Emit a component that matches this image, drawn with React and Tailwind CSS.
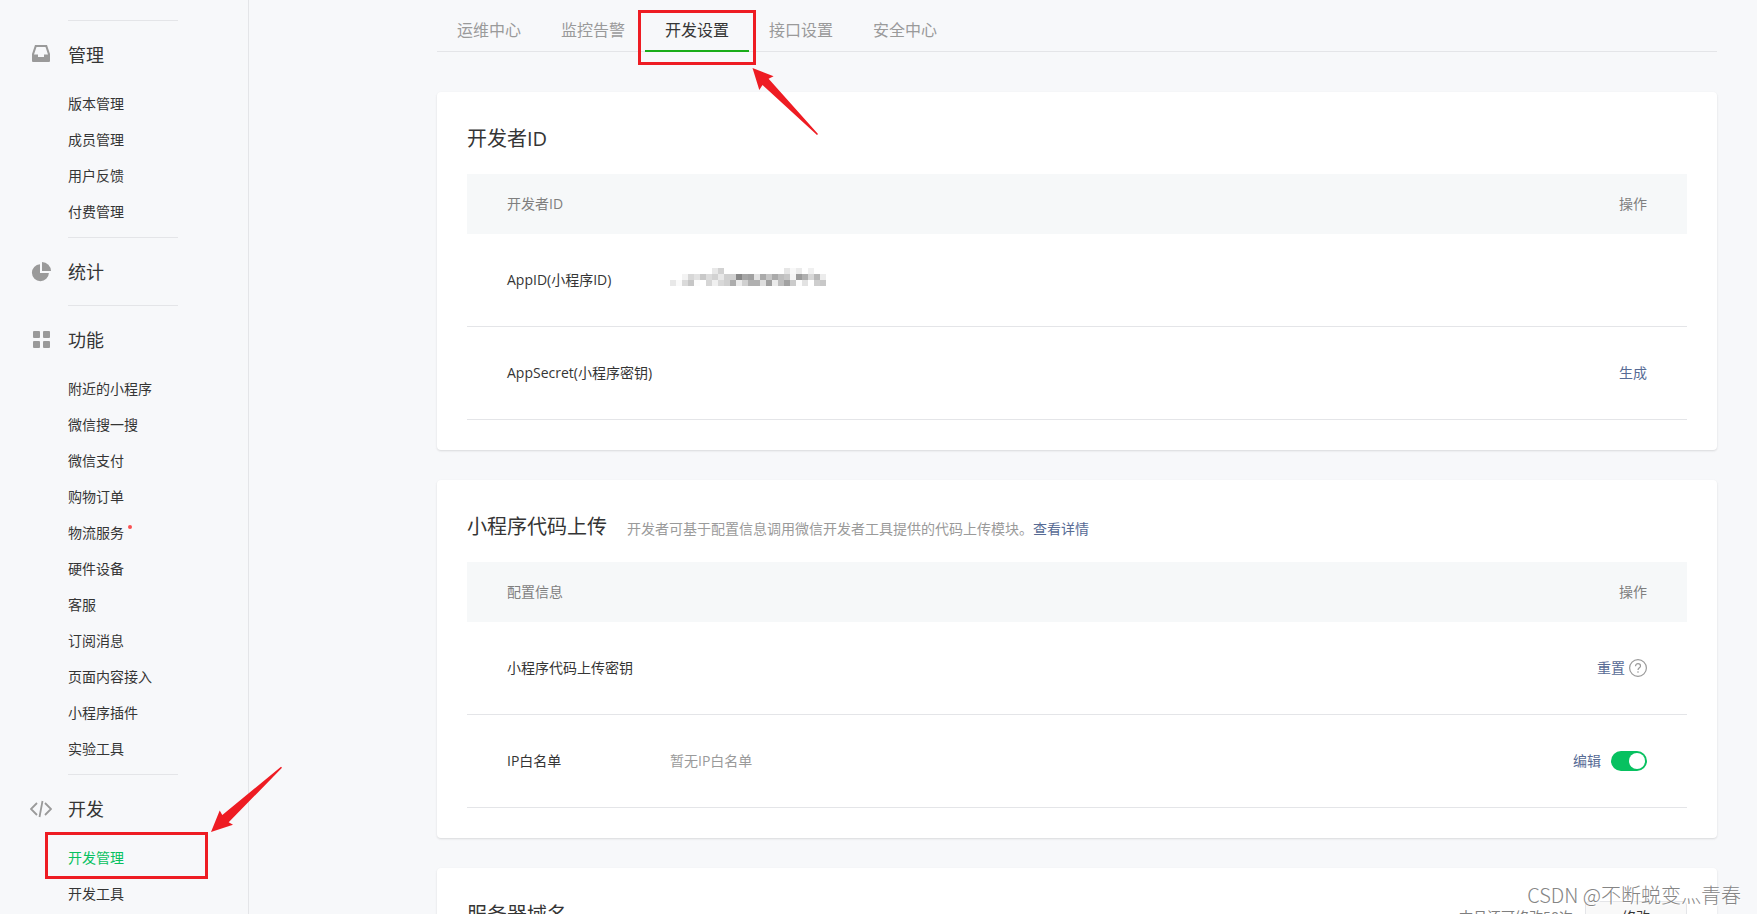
const MENU = [
  {
    title: '管理',
    icon: 'inbox',
    items: [{ name: '版本管理' }, { name: '成员管理' }, { name: '用户反馈' }, { name: '付费管理' }],
  },
  { title: '统计', icon: 'pie', items: [] },
  {
    title: '功能',
    icon: 'grid',
    items: [
      { name: '附近的小程序' },
      { name: '微信搜一搜' },
      { name: '微信支付' },
      { name: '购物订单' },
      { name: '物流服务', dot: true },
      { name: '硬件设备' },
      { name: '客服' },
      { name: '订阅消息' },
      { name: '页面内容接入' },
      { name: '小程序插件' },
      { name: '实验工具' },
    ],
  },
  {
    title: '开发',
    icon: 'code',
    items: [{ name: '开发管理', active: true }, { name: '开发工具' }],
  },
];

const TABS = ['运维中心', '监控告警', '开发设置', '接口设置', '安全中心'];

// grey level of each 6px block, null = empty
const MOSAIC = [
  [null, null, null, null, null, null, null, 232, 210, null, null, null, null, null, null, null, null, null, null, 230, 248, 235, null, 240, null, null],
  [null, null, 243, 215, 226, 200, 220, 210, 232, 208, 208, 135, 166, 160, 226, 170, 198, 170, 190, 198, 245, 155, 175, 215, 184, 236],
  [232, 250, 218, 198, 252, null, 214, 240, 216, 208, 172, 235, 208, 176, 176, 222, 160, 235, 190, 162, 203, 252, 226, null, 206, 200],
];

function MenuIcon({ type }) {
  if (type === 'inbox') {
    return (
      <svg width="22" height="22" viewBox="0 0 22 22" fill="#9a9a9a" fillRule="evenodd">
        <path d="M5 1h12l3 9v7a1 1 0 0 1-1 1H3a1 1 0 0 1-1-1v-7zM6.500 3 4 10.500h4V13h6v-2.500h4L15.500 3z" />
      </svg>
    );
  }
  if (type === 'pie') {
    return (
      <svg width="22" height="22" viewBox="0 0 22 22" fill="#9a9a9a">
        <path d="M10 3.200V12h8.900A8.500 8.500 0 1 1 10 3.200z" />
        <path d="M12 1a9 9 0 0 1 9 9h-9z" />
      </svg>
    );
  }
  if (type === 'grid') {
    return (
      <svg width="22" height="22" viewBox="0 0 22 22" fill="#9a9a9a">
        <rect x="3" y="2" width="7" height="7" rx="1" />
        <rect x="13" y="2" width="7" height="7" rx="1" />
        <rect x="3" y="12" width="7" height="7" rx="1" />
        <rect x="13" y="12" width="7" height="7" rx="1" />
      </svg>
    );
  }
  return (
    <svg width="22" height="22" viewBox="0 0 22 22" fill="none" stroke="#9a9a9a" strokeWidth="1.800">
      <path d="M7 5 1 11l6 6M15 5l6 6-6 6M12.500 3l-3 16" />
    </svg>
  );
}

function Sidebar() {
  return (
    <nav className="w-[249px] shrink-0 border-r border-[#e4e5e8] pt-5">
      {MENU.map(group => (
        <div key={group.title} className={group.items.length ? 'pb-[7px]' : 'pb-0.5'}>
          <div className="ml-[68px] w-[110px] border-t border-[#e4e5e8]" />
          <h3 className="flex items-center pt-[19px] pb-4 pl-[30px] text-lg leading-[30px] text-[#353535]">
            <span className="mr-4">
              <MenuIcon type={group.icon} />
            </span>
            {group.title}
          </h3>
          <ul>
            {group.items.map(item => (
              <li key={item.name} className="relative pl-[68px] text-sm leading-9">
                <a href="#" className={item.active ? 'text-[#07c160]' : 'text-[#353535]'}>
                  {item.name}
                </a>
                {item.dot && <i className="absolute top-2.5 left-32 size-1 rounded-full bg-[#fa5151]" />}
                {item.active && (
                  <>
                    <span className="absolute -top-2 left-[45px] h-[47px] w-[163px] border-3 border-[#ee1c23]" />
                    <svg className="absolute -top-[74px] left-[210px]" width="74" height="68" viewBox="0 0 74 68" fill="#ee1c23">
                      <path d="M1 66 9.700 44.500 12.300 49 71 .700l1 1L18.700 56.300 23 58.700z" />
                    </svg>
                  </>
                )}
              </li>
            ))}
          </ul>
        </div>
      ))}
    </nav>
  );
}

function Tabs() {
  return (
    <div className="flex h-[52px] border-b border-[#e4e5e8]">
      {TABS.map(tab => {
        const active = tab === '开发设置';
        return (
          <div key={tab} className="relative">
            <button
              className={
                active
                  ? 'h-[52px] border-b-2 border-[#1aad19] px-5 pt-2.5 text-base leading-[38px] text-[#353535]'
                  : 'h-[52px] px-5 pt-2.5 pb-0.5 text-base leading-[38px] text-[#9a9a9a]'
              }
            >
              {tab}
            </button>
            {active && (
              <>
                <span className="absolute top-2.5 -left-[7px] h-[55px] w-[118px] border-3 border-[#ee1c23]" />
                <svg className="absolute top-[67px] left-[107px]" width="68" height="70" viewBox="0 0 68 70" fill="#ee1c23">
                  <path d="M.500 1 21.600 9.300l-5 2.400L66 67l-1 1L10.500 18l-3.200 5z" />
                </svg>
              </>
            )}
          </div>
        );
      })}
    </div>
  );
}

function Card({ title, desc, extra, children }) {
  return (
    <section className="rounded-sm bg-white px-[30px] pt-[31px] pb-[30px] shadow-[0_1px_2px_rgba(150,150,150,0.3)]">
      <div className="mb-[19px] flex items-baseline leading-8">
        <h2 className="mr-5 text-xl leading-8 text-[#353535]">{title}</h2>
        {desc}
        {extra}
      </div>
      {children}
    </section>
  );
}

function ConfigTable({ head, rows }) {
  return (
    <table className="w-full table-fixed border-separate border-spacing-0 text-left text-sm text-[#353535]">
      <thead>
        <tr className="h-[60px] bg-[#f6f8f9] text-[#7f7f7f]">
          <th className="w-[203px] pl-10 font-normal">{head}</th>
          <th />
          <th className="w-[200px] pr-10 text-right font-normal">操作</th>
        </tr>
      </thead>
      <tbody>
        {rows.map(row => (
          <tr key={row.label} className="h-[93px]">
            <td className="border-b border-[#e4e5e8] pl-10 whitespace-nowrap">{row.label}</td>
            <td className="border-b border-[#e4e5e8] text-[#9a9a9a]">{row.value}</td>
            <td className="border-b border-[#e4e5e8] pr-10">
              <div className="flex items-center justify-end">{row.action}</div>
            </td>
          </tr>
        ))}
      </tbody>
    </table>
  );
}

function HiddenId() {
  return (
    <svg className="mb-1.5" width="156" height="18" viewBox="0 0 156 18" shapeRendering="crispEdges" aria-label="AppID">
      {MOSAIC.map((line, y) =>
        line.map((g, x) => g && <rect key={`${x}-${y}`} x={x * 6} y={y * 6} width="6" height="6" fill={`rgb(${g},${g},${g})`} />)
      )}
    </svg>
  );
}

function HelpIcon() {
  return (
    <svg className="ml-1" width="18" height="18" viewBox="0 0 18 18" fill="none" stroke="#9a9a9a" strokeWidth="1.200">
      <circle cx="9" cy="9" r="8.400" />
      <path d="M6.500 7.200C6.500 5.600 7.500 4.700 9 4.700s2.500.900 2.500 2.200C11.500 8.700 9 8.800 9 11" />
      <path d="M9 12.300v1.400" />
    </svg>
  );
}

function Link({ children }) {
  return (
    <a href="#" className="text-sm text-[#576b95]">
      {children}
    </a>
  );
}

export default function App() {
  return (
    <div className="relative flex h-screen overflow-hidden bg-[#f7f8fa] font-['Open_Sans','Noto_Sans_CJK_SC',sans-serif]">
      <Sidebar />
      <main className="ml-[188px] mr-10 min-w-0 flex-1">
        <Tabs />
        <div className="mt-10 flex flex-col gap-[30px]">
          <Card title="开发者ID">
            <ConfigTable
              head="开发者ID"
              rows={[
                { label: 'AppID(小程序ID)', value: <HiddenId /> },
                { label: 'AppSecret(小程序密钥)', action: <Link>生成</Link> },
              ]}
            />
          </Card>

          <Card
            title="小程序代码上传"
            desc={
              <p className="text-sm text-[#9a9a9a]">
                开发者可基于配置信息调用微信开发者工具提供的代码上传模块。<Link>查看详情</Link>
              </p>
            }
          >
            <ConfigTable
              head="配置信息"
              rows={[
                { label: '小程序代码上传密钥', action: <><Link>重置</Link><HelpIcon /></> },
                {
                  label: 'IP白名单',
                  value: '暂无IP白名单',
                  action: (
                    <>
                      <Link>编辑</Link>
                      <label className="ml-2.5 flex h-5 w-9 items-center justify-end rounded-full bg-[#07c160] p-0.5">
                        <input type="checkbox" defaultChecked aria-label="IP白名单" className="size-4 appearance-none rounded-full bg-white" />
                      </label>
                    </>
                  ),
                },
              ]}
            />
          </Card>

          <Card
            title="服务器域名"
            extra={
              <div className="ml-auto flex items-center gap-3 text-sm">
                <span className="text-[#7f7f7f]">本月还可修改50次</span>
                <button className="h-8 w-[102px] rounded-sm border border-[#e4e5e8] bg-[#f9f9f9] text-[#353535]">修改</button>
              </div>
            }
          />
        </div>
      </main>
      <div className="absolute right-4 bottom-[3px] font-['Noto_Sans_CJK_SC',sans-serif] text-xl leading-8 font-light text-[#858585] [text-shadow:1px_1px_0_#ffffff]">
        CSDN @不断蜕变灬青春
      </div>
    </div>
  );
}
